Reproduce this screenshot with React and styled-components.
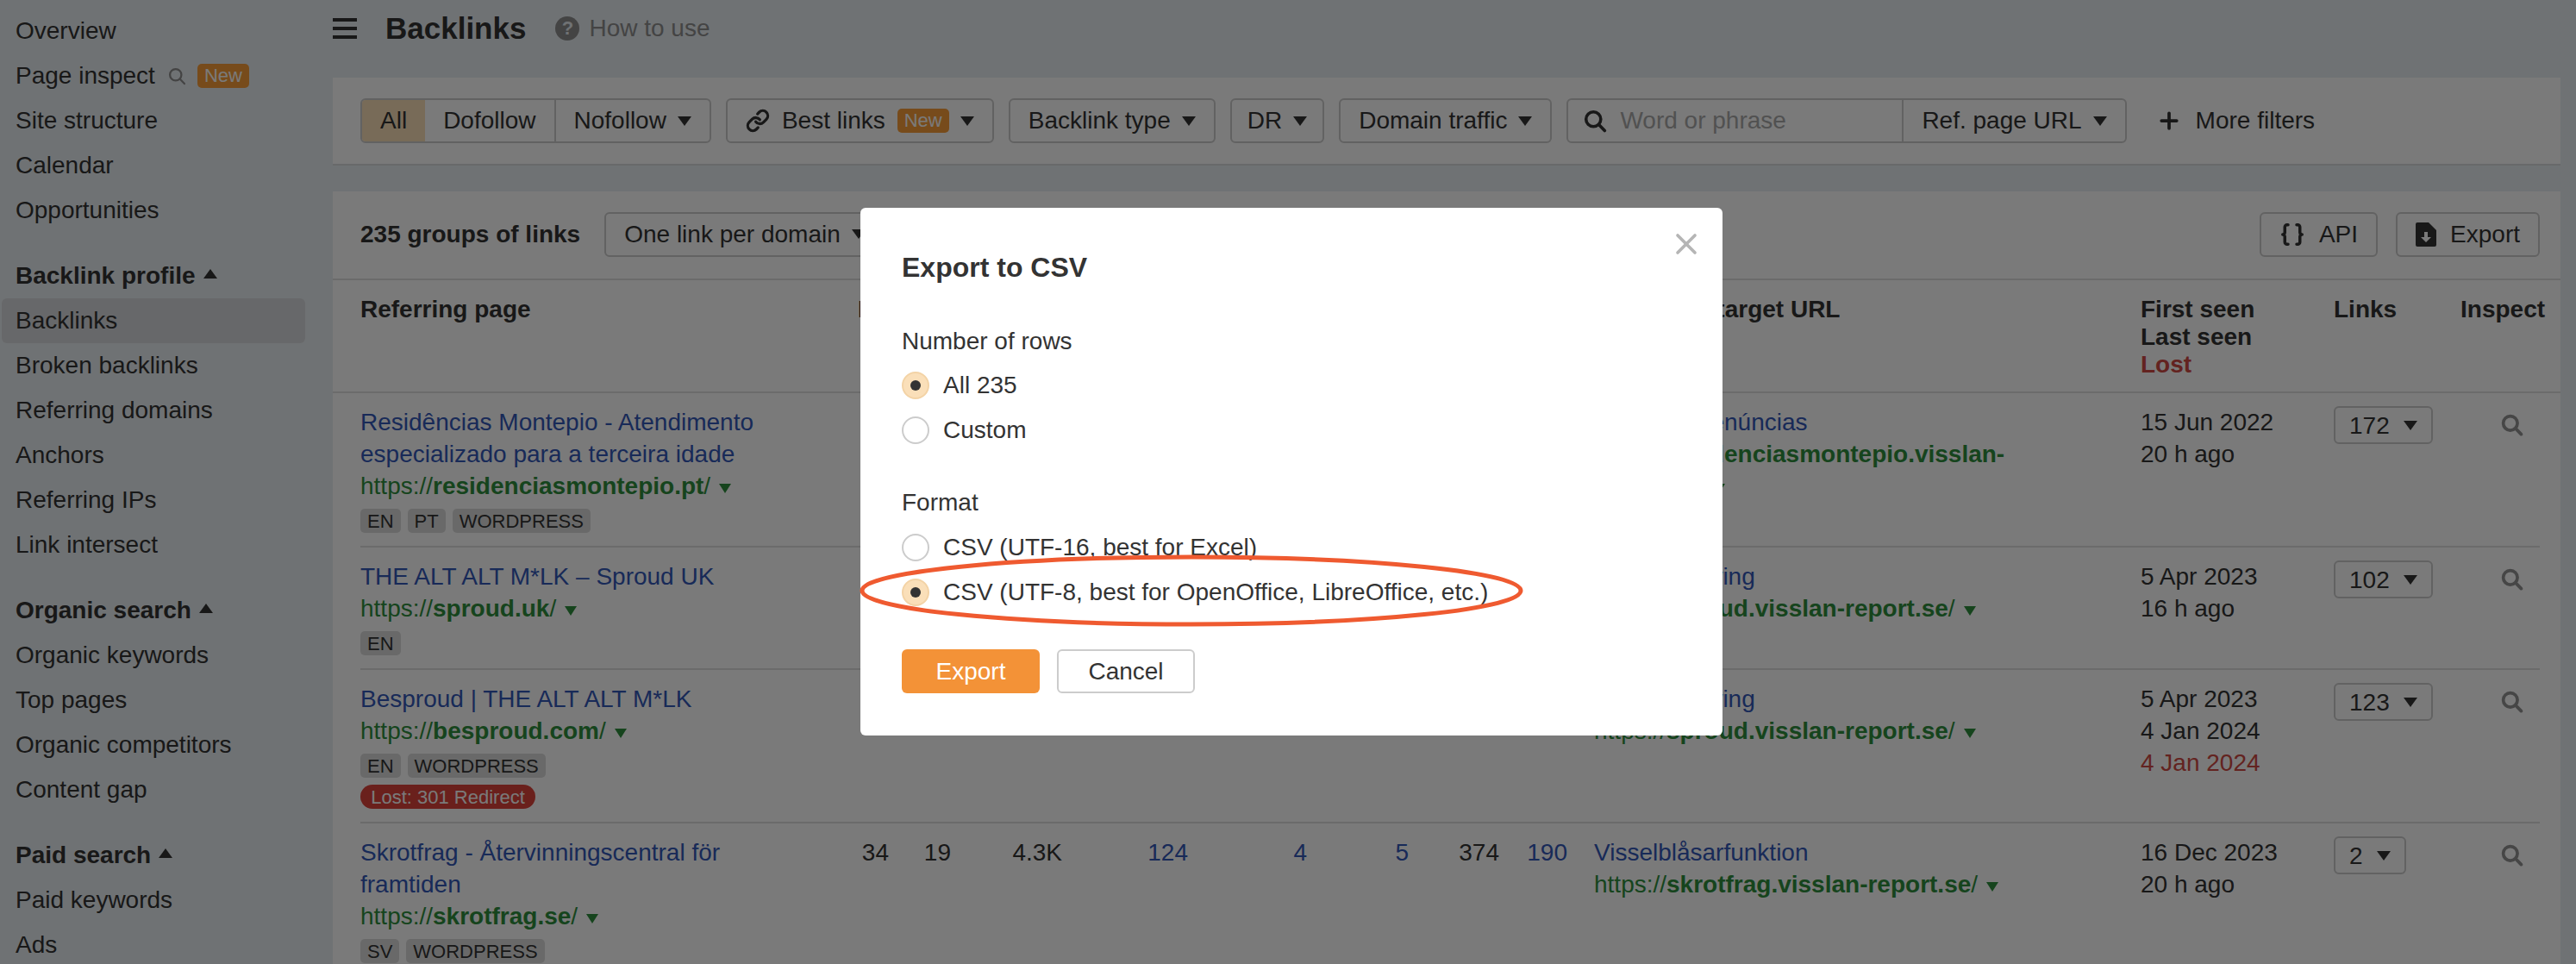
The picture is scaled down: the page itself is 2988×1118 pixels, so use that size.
import React from "react";
import styled, { createGlobalStyle } from "styled-components";
import { Link as LinkIcon, Braces, Plus, X } from "lucide-react";

const GlobalStyle = createGlobalStyle`
  html, body { margin: 0; padding: 0; }
  body {
    background: #e9eef2;
    color: #333;
    font-family: "Liberation Sans", Arial, sans-serif;
    font-size: 28px;
  }
  * { box-sizing: border-box; }
`;

const sideGroups = [
  { items: ["Overview", "Page inspect", "Site structure", "Calendar", "Opportunities"] },
  { title: "Backlink profile", items: ["Backlinks", "Broken backlinks", "Referring domains", "Anchors", "Referring IPs", "Link intersect"] },
  { title: "Organic search", items: ["Organic keywords", "Top pages", "Organic competitors", "Content gap"] },
  { title: "Paid search", items: ["Paid keywords", "Ads"] },
];

const rows = [
  {
    title: "Residências Montepio - Atendimento especializado para a terceira idade",
    host: "residenciasmontepio.pt",
    tags: ["EN", "PT", "WORDPRESS"],
    anchor: "Canal de denúncias",
    target: "residenciasmontepio.visslan-report.se",
    dates: ["15 Jun 2022", "20 h ago"],
    links: 172,
  },
  {
    title: "THE ALT ALT M*LK – Sproud UK",
    host: "sproud.uk",
    tags: ["EN"],
    anchor: "Whistleblowing",
    target: "sproud.visslan-report.se",
    dates: ["5 Apr 2023", "16 h ago"],
    links: 102,
  },
  {
    title: "Besproud | THE ALT ALT M*LK",
    host: "besproud.com",
    tags: ["EN", "WORDPRESS"],
    lost: "Lost: 301 Redirect",
    anchor: "Whistleblowing",
    target: "sproud.visslan-report.se",
    dates: ["5 Apr 2023", "4 Jan 2024"],
    lostDate: "4 Jan 2024",
    links: 123,
  },
  {
    title: "Skrotfrag - Återvinningscentral för framtiden",
    host: "skrotfrag.se",
    tags: ["SV", "WORDPRESS"],
    anchor: "Visselblåsarfunktion",
    target: "skrotfrag.visslan-report.se",
    dates: ["16 Dec 2023", "20 h ago"],
    links: 2,
    stats: [
      { value: "34" },
      { value: "19" },
      { value: "4.3K" },
      { value: "124", link: true },
      { value: "4", link: true },
      { value: "5", link: true },
      { value: "374" },
      { value: "190", link: true },
    ],
  },
];

const SearchIcon = ({ size = 26, stroke = 3.4 }) => (
  <svg width={size} height={size} viewBox="0 0 24 24" fill="none" stroke="currentColor" strokeWidth={stroke} strokeLinecap="round">
    <circle cx="10" cy="10" r="7.6" />
    <line x1="15.8" y1="15.8" x2="21.6" y2="21.8" />
  </svg>
);

const ExportFileIcon = () => (
  <svg width="24" height="28" viewBox="0 0 24 28">
    <path d="M2 0h13l9 9v17a2 2 0 0 1-2 2H2a2 2 0 0 1-2-2V2a2 2 0 0 1 2-2z" fill="#333" />
    <path d="M10 11h4v6h4l-6 6-6-6h4z" fill="#fff" />
  </svg>
);

const App = () => (
  <>
    <GlobalStyle />
    <Page>
      <Sidebar>
        {sideGroups.map((group, index) => (
          <SideGroup key={index}>
            {group.title && (
              <SideTitle>
                {group.title}
                <CaretUp />
              </SideTitle>
            )}
            {group.items.map((item) => (
              <SideItem key={item} $active={item === "Backlinks"}>
                {item}
                {item === "Page inspect" && (
                  <>
                    <SideSearch><SearchIcon size={21} stroke={2.6} /></SideSearch>
                    <NewBadge>New</NewBadge>
                  </>
                )}
              </SideItem>
            ))}
          </SideGroup>
        ))}
      </Sidebar>

      <Main>
        <TopBar>
          <Burger><i /><i /><i /></Burger>
          <PageTitle>Backlinks</PageTitle>
          <HelpDot>?</HelpDot>
          <HowTo>How to use</HowTo>
        </TopBar>

        <FilterPanel>
          <Group>
            <Segment $selected>All</Segment>
            <Segment>Dofollow</Segment>
            <Segment $divided>Nofollow<Caret /></Segment>
          </Group>
          <Group>
            <Segment>
              <LinkIcon size={28} strokeWidth={2.8} />
              <IconLabel>Best links</IconLabel>
              <NewBadge>New</NewBadge>
              <Caret />
            </Segment>
          </Group>
          <Group><Segment>Backlink type<Caret /></Segment></Group>
          <Group><Segment $tight>DR<Caret /></Segment></Group>
          <Group><Segment>Domain traffic<Caret /></Segment></Group>
          <Group>
            <SearchSegment>
              <SearchIcon size={27} stroke={3.2} />
              <Placeholder>Word or phrase</Placeholder>
            </SearchSegment>
            <Segment>Ref. page URL<Caret /></Segment>
          </Group>
          <MoreFilters>
            <Plus size={30} strokeWidth={3} />
            More filters
          </MoreFilters>
        </FilterPanel>

        <TablePanel>
          <TableTools>
            <GroupCount>235 groups of links</GroupCount>
            <Group><Segment>One link per domain<Caret /></Segment></Group>
            <ToolSpacer />
            <ToolButton><Braces size={30} strokeWidth={2.8} />API</ToolButton>
            <ToolButton><ExportFileIcon />Export</ToolButton>
          </TableTools>

          <HeadRow>
            <span>Referring page</span>
            <DrHead>DR</DrHead>
            <span /><span /><span /><span /><span /><span /><span /><span />
            <TargetHead>Anchor and target URL</TargetHead>
            <span>First seen<br />Last seen<br /><RedText>Lost</RedText></span>
            <span>Links</span>
            <span>Inspect</span>
          </HeadRow>

          {rows.map((row) => (
            <Row key={row.host}>
              <div>
                <Title>{row.title}</Title>
                <Url>https://<b>{row.host}</b>/<UrlCaret /></Url>
                <Tags>
                  {row.tags.map((tag) => <Tag key={tag}>{tag}</Tag>)}
                </Tags>
                {row.lost && <LostPill>{row.lost}</LostPill>}
              </div>
              {Array.from({ length: 8 }, (_, i) => {
                const stat = row.stats && row.stats[i];
                return <Stat key={i} $link={stat && stat.link}>{stat ? stat.value : ""}</Stat>;
              })}
              <span />
              <div>
                <Anchor>{row.anchor}</Anchor>
                <TargetUrl>https://<b>{row.target}</b>/<UrlCaret /></TargetUrl>
              </div>
              <Dates>
                {row.dates.map((date, i) => <div key={i}>{date}</div>)}
                {row.lostDate && <RedText>{row.lostDate}</RedText>}
              </Dates>
              <div><LinksSelect>{row.links}<Caret $gap={16} /></LinksSelect></div>
              <Inspect><SearchIcon /></Inspect>
            </Row>
          ))}
        </TablePanel>
      </Main>

      <Overlay>
        <Dialog>
          <CloseButton><X size={40} strokeWidth={2.2} /></CloseButton>
          <DialogTitle>Export to CSV</DialogTitle>
          <FieldLabel>Number of rows</FieldLabel>
          <RadioRow><Radio $checked />All 235</RadioRow>
          <RadioRow><Radio />Custom</RadioRow>
          <FieldLabel $gap={40} $after={8}>Format</FieldLabel>
          <RadioRow><Radio />CSV (UTF-16, best for Excel)</RadioRow>
          <RadioRow><Radio $checked />CSV (UTF-8, best for OpenOffice, LibreOffice, etc.)</RadioRow>
          <DialogButtons>
            <PrimaryButton>Export</PrimaryButton>
            <CancelButton>Cancel</CancelButton>
          </DialogButtons>
          <HandCircle width="771" height="85" viewBox="0 0 771 85">
            <ellipse cx="385" cy="42" rx="382" ry="39" fill="none" stroke="#ef5a30" strokeWidth="5" />
          </HandCircle>
        </Dialog>
      </Overlay>
    </Page>
  </>
);

const Page = styled.div`
  display: flex;
  height: 1118px;
  overflow: hidden;
`;

const Sidebar = styled.nav`
  flex: 0 0 386px;
  padding: 10px 0 0 2px;
  display: flex;
  flex-direction: column;
  gap: 24px;
`;
const SideGroup = styled.div`
  display: flex;
  flex-direction: column;
`;
const SideItem = styled.div`
  width: 352px;
  height: 52px;
  flex-shrink: 0;
  padding-left: 16px;
  display: flex;
  align-items: center;
  border-radius: 6px;
  background: ${(p) => (p.$active ? "#d8dadd" : "transparent")};
`;
const SideTitle = styled(SideItem)`
  font-weight: bold;
`;
const SideSearch = styled.span`
  display: flex;
  margin: 0 13px 0 15px;
  color: #8e8e8e;
`;
const CaretUp = styled.i`
  margin-left: 9px;
  margin-bottom: 5px;
  border-left: 8px solid transparent;
  border-right: 8px solid transparent;
  border-bottom: 11px solid #333;
`;
const NewBadge = styled.span`
  height: 28px;
  padding: 0 8px;
  display: inline-flex;
  align-items: center;
  border-radius: 5px;
  background: #f99e3a;
  color: #fff;
  font-size: 22px;
`;

const Main = styled.main`
  flex: 0 0 2584px;
  display: flex;
  flex-direction: column;
`;
const TopBar = styled.header`
  flex: 0 0 66px;
  margin-bottom: 24px;
  display: flex;
  align-items: center;
`;
const Burger = styled.div`
  width: 28px;
  height: 24px;
  margin-right: 33px;
  display: flex;
  flex-direction: column;
  justify-content: space-between;
  i { height: 4px; background: #333; }
`;
const PageTitle = styled.h1`
  margin: 0 34px 0 0;
  font-size: 35px;
  font-weight: bold;
`;
const HelpDot = styled.span`
  width: 28px;
  height: 28px;
  margin-right: 11px;
  display: flex;
  align-items: center;
  justify-content: center;
  border-radius: 50%;
  background: #8e8e8e;
  color: #e9eef2;
  font-size: 22px;
  font-weight: bold;
`;
const HowTo = styled.span`
  color: #8e8e8e;
`;

const FilterPanel = styled.section`
  flex: 0 0 102px;
  padding: 24px 32px;
  border-bottom: 2px solid #d9dbdd;
  display: flex;
  gap: 17px;
  background: #fff;
`;
const Group = styled.div`
  height: 52px;
  display: flex;
  border: 2px solid #ccc;
  border-radius: 6px;
  overflow: hidden;
`;
const Segment = styled.div`
  padding: 0 ${(p) => (p.$tight ? 18 : 21)}px;
  display: flex;
  align-items: center;
  white-space: nowrap;
  border-left: ${(p) => (p.$divided ? "2px solid #ccc" : "0")};
  background: ${(p) => (p.$selected ? "#fadfb9" : "transparent")};
`;
const SearchSegment = styled.div`
  width: 389px;
  padding-left: 18px;
  display: flex;
  align-items: center;
  gap: 15px;
  border-right: 2px solid #ccc;
`;
const Placeholder = styled.span`
  color: #aaa;
`;
const IconLabel = styled.span`
  margin: 0 14px;
`;
const Caret = styled.i`
  margin-left: ${(p) => p.$gap || 13}px;
  border-left: 8px solid transparent;
  border-right: 8px solid transparent;
  border-top: 11px solid #333;
`;
const MoreFilters = styled.div`
  margin-left: 17px;
  display: flex;
  align-items: center;
  gap: 16px;
`;

const TablePanel = styled.section`
  margin-top: 30px;
  flex: 1 0 auto;
  background: #fff;
`;
const TableTools = styled.div`
  height: 103px;
  padding: 0 24px 2px 32px;
  border-bottom: 2px solid #e0e0e0;
  display: flex;
  align-items: center;
`;
const GroupCount = styled.strong`
  margin-right: 28px;
`;
const ToolSpacer = styled.div`
  flex: 1;
`;
const ToolButton = styled.div`
  height: 52px;
  margin-left: 21px;
  padding: 0 21px;
  display: flex;
  align-items: center;
  gap: 16px;
  border: 2px solid #ccc;
  border-radius: 6px;
`;

const tableGrid = "542px 71px 72px 129px 146px 138px 118px 105px 79px 31px 634px 224px 147px 92px";

const HeadRow = styled.div`
  padding: 18px 24px 15px 32px;
  border-bottom: 2px solid #e0e0e0;
  display: grid;
  grid-template-columns: ${tableGrid};
  font-weight: bold;
  line-height: 32px;
`;
const DrHead = styled.span`
  padding-left: 35px;
`;
const TargetHead = styled.span`
  margin-left: -21px;
  white-space: nowrap;
`;
const RedText = styled.span`
  color: #d04a44;
`;

const Row = styled.div`
  margin: 0 24px 0 32px;
  padding: 15px 0;
  border-bottom: 2px solid #e0e0e0;
  display: grid;
  grid-template-columns: ${tableGrid};
  line-height: 37px;
`;
const Title = styled.div`
  max-width: 500px;
  color: #3458b8;
`;
const Url = styled.div`
  color: #2f8f3e;
  white-space: nowrap;
`;
const UrlCaret = styled.i`
  display: inline-block;
  margin-left: 10px;
  vertical-align: 1px;
  border-left: 7px solid transparent;
  border-right: 7px solid transparent;
  border-top: 11px solid #2f8f3e;
`;
const Tags = styled.div`
  margin-top: 8px;
  display: flex;
  gap: 8px;
`;
const Tag = styled.span`
  height: 28px;
  padding: 0 8px;
  display: flex;
  align-items: center;
  border-radius: 5px;
  background: #dcdcdc;
  font-size: 22px;
`;
const LostPill = styled.div`
  width: 203px;
  height: 28px;
  margin-top: 8px;
  display: flex;
  align-items: center;
  justify-content: center;
  border-radius: 14px;
  background: #dd433b;
  color: #fff;
  font-size: 22px;
  white-space: nowrap;
`;
const Stat = styled.div`
  text-align: right;
  color: ${(p) => (p.$link ? "#3458b8" : "#333")};
`;
const Anchor = styled.div`
  color: #3458b8;
`;
const TargetUrl = styled.div`
  max-width: 520px;
  color: #2f8f3e;
`;
const Dates = styled.div`
  display: flex;
  flex-direction: column;
`;
const LinksSelect = styled.div`
  height: 44px;
  padding: 0 16px;
  display: inline-flex;
  align-items: center;
  border: 2px solid #ccc;
  border-radius: 6px;
`;
const Inspect = styled.div`
  height: 44px;
  padding-right: 19px;
  display: flex;
  align-items: center;
  justify-content: flex-end;
  color: #929292;
`;

const Overlay = styled.div`
  position: fixed;
  inset: 0;
  padding: 241px 0 0 998px;
  background: rgba(0, 0, 0, 0.52);
`;
const Dialog = styled.div`
  position: relative;
  width: 1000px;
  height: 612px;
  padding: 49px 48px;
  border-radius: 6px;
  background: #fff;
`;
const CloseButton = styled.div`
  position: absolute;
  top: 22px;
  right: 22px;
  display: flex;
  color: #b5b5b5;
`;
const DialogTitle = styled.h2`
  margin: 0 0 48px;
  font-size: 32px;
  line-height: 40px;
  font-weight: bold;
`;
const FieldLabel = styled.div`
  margin-top: ${(p) => p.$gap || 0}px;
  margin-bottom: ${(p) => p.$after || 7}px;
  line-height: 36px;
`;
const RadioRow = styled.div`
  height: 52px;
  display: flex;
  align-items: center;
  gap: 16px;
`;
const Radio = styled.span`
  width: 32px;
  height: 32px;
  display: flex;
  align-items: center;
  justify-content: center;
  border-radius: 50%;
  border: 2px solid ${(p) => (p.$checked ? "#f3d3a6" : "#ccc")};
  background: ${(p) => (p.$checked ? "#fadfb9" : "#fff")};
  &::after {
    content: "";
    width: 12px;
    height: 12px;
    border-radius: 50%;
    background: ${(p) => (p.$checked ? "#333" : "transparent")};
  }
`;
const DialogButtons = styled.div`
  margin-top: 40px;
  display: flex;
  gap: 20px;
`;
const PrimaryButton = styled.div`
  width: 160px;
  height: 51px;
  display: flex;
  align-items: center;
  justify-content: center;
  border-radius: 6px;
  background: #f39237;
  color: #fff;
`;
const CancelButton = styled(PrimaryButton)`
  border: 2px solid #ccc;
  background: #fff;
  color: #333;
`;
const HandCircle = styled.svg`
  position: absolute;
  left: -1px;
  top: 402px;
  pointer-events: none;
`;

export default App;
